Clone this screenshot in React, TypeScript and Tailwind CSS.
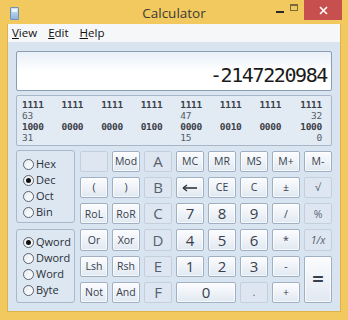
import React from "react";

type B = { l: React.ReactNode; d?: boolean; cs?: number; rs?: number; big?: boolean; cls?: string };

const Arrow = (
  <svg width="16" height="8" viewBox="0 0 16 8">
    <path d="M1 4 H15" stroke="#2f3640" strokeWidth="1.6" />
    <path d="M1 4 L5 1 M1 4 L5 7" stroke="#2f3640" strokeWidth="1.4" fill="none" />
  </svg>
);

const rows: B[] = [
  { l: "", d: true }, { l: "Mod" }, { l: "A", d: true, big: true }, { l: "MC" }, { l: "MR" }, { l: "MS" }, { l: "M+" }, { l: "M-" },
  { l: "(" }, { l: ")" }, { l: "B", d: true, big: true }, { l: Arrow }, { l: "CE" }, { l: "C" }, { l: "±" }, { l: "√", d: true },
  { l: "RoL" }, { l: "RoR" }, { l: "C", d: true, big: true }, { l: "7", big: true }, { l: "8", big: true }, { l: "9", big: true }, { l: "/" }, { l: "%", d: true },
  { l: "Or" }, { l: "Xor" }, { l: "D", d: true, big: true }, { l: "4", big: true }, { l: "5", big: true }, { l: "6", big: true }, { l: "*" }, { l: "1/x", d: true, cls: "text-[10.5px] italic" },
  { l: "Lsh" }, { l: "Rsh" }, { l: "E", d: true, big: true }, { l: "1", big: true }, { l: "2", big: true }, { l: "3", big: true }, { l: "-" }, { l: "=", rs: 2, cls: "text-[20px] font-bold" },
  { l: "Not" }, { l: "And" }, { l: "F", d: true, big: true }, { l: "0", big: true, cs: 2 }, { l: ".", d: true }, { l: "+" },
];

function Btn({ b }: { b: B }) {
  const base =
    "flex items-center justify-center rounded-[2px] border leading-none select-none";
  const en =
    "bg-gradient-to-b from-[#fbfcfe] via-[#eff3f8] to-[#e1e8f1] border-[#9fb0c4] text-[#37404c] shadow-[inset_0_0_0_1px_rgba(255,255,255,0.7)]";
  const dis = "bg-[#dee7f1] border-[#c3cfdd] text-[#56616f]";
  const size = b.big ? "text-[15px]" : "text-[10.5px] font-medium";
  return (
    <div
      className={`${base} ${b.d ? dis : en} ${b.cls ?? size} ${b.cs === 2 ? "col-span-2" : ""} ${b.rs === 2 ? "row-span-2" : ""}`}
    >
      {b.l}
    </div>
  );
}

function Radio({ label, on }: { label: string; on?: boolean }) {
  return (
    <div className="flex items-center h-[16px]">
      <div className="w-[11px] h-[11px] rounded-full border border-[#5a6470] bg-gradient-to-br from-[#e8ecf0] to-white flex items-center justify-center">
        {on && <div className="w-[5px] h-[5px] rounded-full bg-[#111]" />}
      </div>
      <span className="ml-[2px] text-[11px] text-[#2a2f36]">{label}</span>
    </div>
  );
}

const groups = 8;
function BinRow({ cells }: { cells: (string | null)[] }) {
  return (
    <div className="flex justify-between h-[11px] leading-[11px]">
      {cells.map((c, i) => (
        <div key={i} className={`w-[23px] ${i === groups - 1 ? "text-right" : "text-left"}`}>
          {c ?? ""}
        </div>
      ))}
    </div>
  );
}

export default function App() {
  return (
    <div
      className="w-[348px] h-[320px] bg-[#f2c95e] flex flex-col overflow-hidden"
      style={{ fontFamily: '"Open Sans", "Noto Sans", sans-serif' }}
    >
      {/* title bar */}
      <div className="h-[24px] relative flex items-center justify-center shrink-0">
        <div className="absolute left-[10px] top-[7px] w-[9px] h-[13px] rounded-[1px] bg-gradient-to-b from-[#cfe3f5] to-[#8fb5dc] border border-[#6d93bd]">
          <div className="mx-[1px] mt-[1px] h-[3px] bg-white/80" />
        </div>
        <span className="text-[13.5px] text-[#3a3a3a] mt-[2px]">Calculator</span>
        <div className="absolute right-[64px] top-[11px] w-[8px] h-[2px] bg-[#2a2a2a]" />
        <div className="absolute right-[50px] top-[4px] w-[8px] h-[7px] border border-[#7a6a3a] border-t-2" />
        <div className="absolute right-[6px] top-0 w-[38px] h-[20px] bg-[#c7504f] flex items-center justify-center">
          <svg width="9" height="9" viewBox="0 0 9 9">
            <path d="M1 1 L8 8 M8 1 L1 8" stroke="white" strokeWidth="1.6" />
          </svg>
        </div>
      </div>
      {/* client */}
      <div className="flex-1 mx-[7px] mb-[8px] flex flex-col border border-[#e0b24a] border-t-0">
        <div className="h-[18px] bg-[#f6f7f9] flex items-center gap-[11px] px-[4px] text-[11.5px] text-[#111] shrink-0">
          <span><u>V</u>iew</span>
          <span><u>E</u>dit</span>
          <span><u>H</u>elp</span>
        </div>
        <div className="flex-1 bg-[#d9e4f1] px-[8px] pt-[9px] flex flex-col">
          {/* display */}
          <div className="h-[40px] rounded-[2px] border border-[#8d9db2] bg-gradient-to-b from-[#e9f0f8] via-white to-white flex items-end justify-end pr-[4px] pb-[5px]">
            <span
              className="text-[20px] leading-none text-[#1a1a1a] tracking-[-1.4px]"
              style={{ fontFamily: '"DejaVu Sans Mono", "Liberation Mono", monospace' }}
            >
              -2147220984
            </span>
          </div>
          {/* binary panel */}
          <div
            className="mt-[4px] h-[51px] rounded-[2px] border border-[#a7b6c8] bg-[#e2eaf4] pl-[5px] pr-[9px] pt-[3px] text-[9.5px] font-bold text-[#3b4048] tracking-[-0.3px]"
            style={{ fontFamily: '"DejaVu Sans Mono", "Liberation Mono", monospace' }}
          >
            <BinRow cells={["1111", "1111", "1111", "1111", "1111", "1111", "1111", "1111"]} />
            <div className="font-normal text-[#555c66]">
              <BinRow cells={["63", null, null, null, "47", null, null, "32"]} />
            </div>
            <BinRow cells={["1000", "0000", "0000", "0100", "0000", "0010", "0000", "1000"]} />
            <div className="font-normal text-[#555c66]">
              <BinRow cells={["31", null, null, null, "15", null, null, "0"]} />
            </div>
          </div>
          {/* lower */}
          <div className="mt-[4px] flex">
            <div className="w-[59px] flex flex-col gap-[6px]">
              <div className="h-[73px] rounded-[3px] border border-[#a9b8ca] bg-[#dde7f2] pl-[6px] pt-[5px] flex flex-col">
                <Radio label="Hex" />
                <Radio label="Dec" on />
                <Radio label="Oct" />
                <Radio label="Bin" />
              </div>
              <div className="h-[74px] rounded-[3px] border border-[#a9b8ca] bg-[#dde7f2] pl-[6px] pt-[4px] flex flex-col">
                <Radio label="Qword" on />
                <Radio label="Dword" />
                <Radio label="Word" />
                <Radio label="Byte" />
              </div>
            </div>
            <div className="ml-[5px] mt-[1px] w-[252px] h-[152px] grid grid-cols-8 grid-rows-6 gap-x-[4px] gap-y-[5px]">
              {rows.map((b, i) => (
                <Btn key={i} b={b} />
              ))}
            </div>
          </div>
        </div>
      </div>
    </div>
  );
}
